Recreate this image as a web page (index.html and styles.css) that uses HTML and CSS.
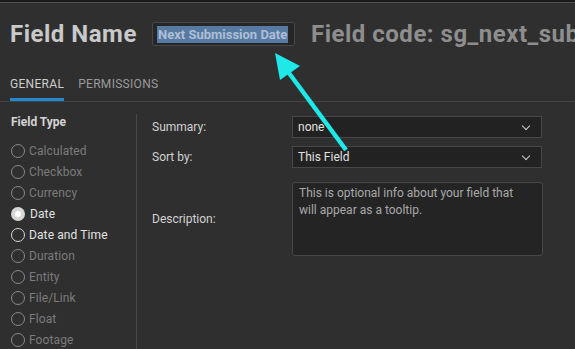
FILE: index.html
```html
<!DOCTYPE html>
<html lang="en">
<head>
    <meta charset="UTF-8">
    <title>Field Settings</title>
    <link rel="stylesheet" href="styles.css">
</head>
<body>
<div class="topbar"></div>
<div class="header">
    <h1 class="title">Field Name</h1>
    <div class="name-input"><span class="selected">Next Submission Date</span></div>
    <h1 class="code">Field code: sg_next_submission_date</h1>
</div>
<div class="tabs">
    <div class="tab active">GENERAL</div>
    <div class="tab">PERMISSIONS</div>
</div>
<div class="content">
    <!-- Field types -->
    <div class="sidebar">
        <div class="side-title">Field Type</div>
        <ul class="types">
            <li class="disabled"><span class="radio"></span>Calculated</li>
            <li class="disabled"><span class="radio"></span>Checkbox</li>
            <li class="disabled"><span class="radio"></span>Currency</li>
            <li><span class="radio checked"></span>Date</li>
            <li><span class="radio"></span>Date and Time</li>
            <li class="disabled"><span class="radio"></span>Duration</li>
            <li class="disabled"><span class="radio"></span>Entity</li>
            <li class="disabled"><span class="radio"></span>File/Link</li>
            <li class="disabled"><span class="radio"></span>Float</li>
            <li class="disabled"><span class="radio"></span>Footage</li>
        </ul>
    </div>
    <!-- Settings form -->
    <div class="form">
        <div class="row">
            <label>Summary:</label>
            <div class="select">none<span class="chev"></span></div>
        </div>
        <div class="row">
            <label>Sort by:</label>
            <div class="select">This Field<span class="chev"></span></div>
        </div>
        <div class="row desc">
            <label>Description:</label>
            <div class="textarea">This is optional info about your field that will appear as a tooltip.</div>
        </div>
    </div>
</div>
<svg class="arrow" width="575" height="349" viewBox="0 0 575 349">
    <line x1="346" y1="150" x2="286" y2="69" stroke="#1ee8e8" stroke-width="4.5"/>
    <polygon points="275,53 280,80 300,66" fill="#1ee8e8"/>
</svg>
</body>
</html>
```

FILE: styles.css
```css
body {
    margin: 0;
    background: #2f2f2f;
    font-family: Roboto, "Noto Sans", sans-serif;
    color: #d0d0d0;
    width: 575px;
    height: 349px;
    overflow: hidden;
    position: relative;
}

.topbar {
    height: 2px;
    background: #1b1b1b;
    border-bottom: 1px solid #4d4d4d;
}

.header {
    display: flex;
    align-items: center;
    height: 62px;
    padding-left: 10px;
    white-space: nowrap;
    overflow: hidden;
}

.header > * {
    flex-shrink: 0;
}

.title {
    margin: 0;
    font-size: 24px;
    font-weight: bold;
    letter-spacing: 0.5px;
    color: #c9c9c9;
    width: 142px;
}

.code {
    margin: 0 0 0 16px;
    font-size: 24px;
    font-weight: bold;
    letter-spacing: 0.5px;
    color: #8e8e8e;
}

.name-input {
    width: 137px;
    height: 22px;
    border: 1px solid #474747;
    border-radius: 2px;
    background: #262626;
    padding-left: 4px;
    display: flex;
    align-items: center;
}

.selected {
    background: #577aa3;
    color: #aebfd6;
    font-size: 13px;
    font-weight: bold;
    line-height: 17px;
    padding: 0 1px;
}

.tabs {
    display: flex;
    gap: 14px;
    padding-left: 10px;
    height: 35px;
    border-bottom: 1px solid #434343;
    box-sizing: border-box;
    margin-top: 2px;
}

.tab {
    font-size: 12px;
    color: #9a9a9a;
    letter-spacing: 0.3px;
    padding-top: 10px;
}

.tab.active {
    color: #cdcdcd;
    border-bottom: 3px solid #1f8ad2;
}

.content {
    display: flex;
}

.sidebar {
    width: 125px;
    padding: 0 0 0 11px;
    border-right: 1px solid #474747;
    margin-top: 12px;
}

.side-title {
    font-size: 12px;
    font-weight: bold;
    color: #d4d4d4;
    margin-top: 1px;
    height: 25px;
}

.types {
    list-style: none;
    margin: 0;
    padding: 0;
}

.types li {
    display: flex;
    align-items: center;
    height: 21px;
    font-size: 12px;
    letter-spacing: 0.1px;
    color: #e2e2e2;
}

.types li.disabled {
    color: #7b7b7b;
}

.radio {
    width: 12px;
    height: 12px;
    border: 1px solid #8a8a8a;
    border-radius: 50%;
    margin-right: 4px;
    box-sizing: content-box;
}

.types li:not(.disabled) .radio {
    border-color: #d6d6d6;
}

.radio.checked {
    width: 6px;
    height: 6px;
    border: 4px solid #1e88d6;
    background: #fff;
    margin: 0 5px 0 0;
}

.form {
    flex: 1;
    padding: 14px 0 0 15px;
}

.row {
    display: flex;
    align-items: center;
    margin-bottom: 8px;
}

.row label {
    width: 140px;
    font-size: 12px;
    color: #d2d2d2;
}

.select {
    width: 250px;
    height: 22px;
    box-sizing: border-box;
    border: 1px solid #474747;
    background: #222222;
    font-size: 12px;
    color: #e0e0e0;
    padding-left: 5px;
    display: flex;
    align-items: center;
    justify-content: space-between;
}

.chev {
    width: 5px;
    height: 5px;
    border-right: 1.5px solid #cfcfcf;
    border-bottom: 1.5px solid #cfcfcf;
    transform: rotate(45deg);
    margin: 0 12px 3px 0;
}

.row.desc {
    margin-top: 14px;
}

.textarea {
    width: 251px;
    height: 74px;
    box-sizing: border-box;
    border: 1px solid #474747;
    border-radius: 3px;
    background: #242424;
    font-size: 12px;
    line-height: 17px;
    color: #a9a9a9;
    padding: 2px 14px 0 6px;
}

.arrow {
    position: absolute;
    left: 0;
    top: 0;
    pointer-events: none;
}
```
